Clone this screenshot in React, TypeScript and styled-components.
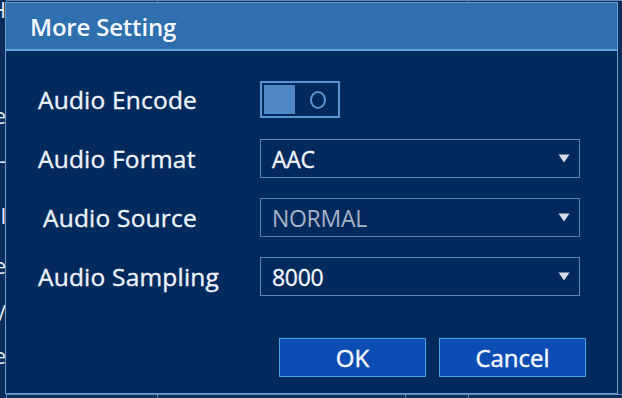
import styled, { createGlobalStyle } from 'styled-components';

const GlobalStyle = createGlobalStyle`
  html, body {
    margin: 0;
    padding: 0;
    background: #0c2c5c;
  }
  body {
    font-family: 'Open Sans', 'Noto Sans', sans-serif;
  }
`;

const Page = styled.div`
  position: relative;
  width: 622px;
  height: 398px;
  overflow: hidden;
  display: flex;
  background: #0c2c5c;
`;

// the settings page that sits behind the modal
const SideList = styled.ul`
  list-style: none;
  margin: 0;
  padding: 0;
  width: 6px;
  flex-shrink: 0;
  display: flex;
  flex-direction: column;
  align-items: flex-end;
  border-right: 1px solid #4f7fb6;
`;

const SideItem = styled.li<{ top: number }>`
  display: flex;
  justify-content: flex-end;
  width: 6px;
  height: 20px;
  margin-top: ${(p) => p.top}px;
  color: #e8eef8;
  font-size: 21px;
  line-height: 20px;
  white-space: nowrap;
`;

const Content = styled.div`
  flex: 1;
  display: flex;
  flex-direction: column;
  justify-content: space-between;
`;

const GridRow = styled.div`
  height: 3px;
  display: flex;
  border-top: 1px solid #5a88bd;
`;

const GridCell = styled.div<{ w: number }>`
  width: ${(p) => p.w}px;
  border-right: 1px solid #5a88bd;
`;

const Dialog = styled.div`
  position: absolute;
  left: 5px;
  top: 2px;
  width: 611px;
  height: 390px;
  display: flex;
  flex-direction: column;
  background: #032a5d;
  border: 1px solid #6a9ccf;
`;

const TitleBar = styled.div`
  height: 46px;
  display: flex;
  align-items: center;
  padding-left: 24px;
  background: #2e6fae;
  border-bottom: 2px solid #5fa6e0;
  color: #f4f8fd;
  font-size: 24px;
  font-weight: 600;
  letter-spacing: -0.2px;
`;

const Body = styled.div`
  flex: 1;
  display: flex;
  flex-direction: column;
  padding: 29px 32px 16px 32px;
  gap: 20px;
`;

const Row = styled.div`
  height: 39px;
  display: flex;
  align-items: center;
`;

const Label = styled.div<{ indent?: boolean }>`
  width: 222px;
  padding-left: ${(p) => (p.indent ? 5 : 0)}px;
  box-sizing: border-box;
  color: #eef3fa;
  font-size: 24.5px;
  letter-spacing: 0.2px;
  -webkit-text-stroke: 0.35px #eef3fa;
  white-space: nowrap;
`;

const Toggle = styled.div`
  width: 80px;
  height: 37px;
  box-sizing: border-box;
  border: 2px solid #5a93d1;
  display: flex;
  align-items: center;
  padding: 2px;
`;

const Knob = styled.div`
  width: 31px;
  height: 29px;
  background: #4f87c5;
`;

const OffMark = styled.svg`
  margin-left: 14px;
`;

const Select = styled.div<{ disabled?: boolean }>`
  width: 320px;
  height: 39px;
  box-sizing: border-box;
  border: 1px solid ${(p) => (p.disabled ? '#5a7fab' : '#5f86b6')};
  display: flex;
  align-items: center;
  padding: 0 9px 0 11px;
  color: ${(p) => (p.disabled ? '#a7b3c6' : '#f4f7fc')};
  font-size: 23px;
  letter-spacing: -0.3px;
  -webkit-text-stroke: ${(p) => (p.disabled ? 0 : 0.3)}px currentColor;
`;

const Value = styled.span`
  flex: 1;
`;

const Footer = styled.div`
  margin-top: 22px;
  display: flex;
  justify-content: flex-end;
  gap: 13px;
  margin-right: -1px;
`;

const Button = styled.button`
  width: 147px;
  height: 39px;
  box-sizing: border-box;
  background: #0b4db2;
  border: 1px solid #43a4e8;
  color: #f4f8fd;
  font-family: inherit;
  font-size: 24px;
  -webkit-text-stroke: 0.45px #f4f8fd;
  padding: 0;
`;

const Arrow = () => (
  <svg width="12" height="9" viewBox="0 0 12 9">
    <path d="M0.5 0.5 H11.5 L6 8.5 Z" fill="#d6dde8" />
  </svg>
);

const rows = [
  { label: 'Audio Format', value: 'AAC' },
  { label: 'Audio Source', value: 'NORMAL', disabled: true, indent: true },
  { label: 'Audio Sampling', value: '8000' },
];

export default function App() {
  return (
    <>
      <GlobalStyle />
      <Page>
        <SideList>
          <SideItem top={0}>H</SideItem>
          <SideItem top={86}>e</SideItem>
          <SideItem top={24}>-</SideItem>
          <SideItem top={36}>l</SideItem>
          <SideItem top={30}>e</SideItem>
          <SideItem top={27}>/</SideItem>
          <SideItem top={23}>e</SideItem>
        </SideList>
        <Content>
          <GridRow>
            <GridCell w={150} />
            <GridCell w={310} />
          </GridRow>
          <GridRow>
            <GridCell w={150} />
            <GridCell w={247} />
            <GridCell w={62} />
          </GridRow>
        </Content>

        <Dialog>
          <TitleBar>More Setting</TitleBar>
          <Body>
            <Row>
              <Label>Audio Encode</Label>
              <Toggle>
                <Knob />
                <OffMark width="18" height="20" viewBox="0 0 18 20">
                  <ellipse cx="9" cy="10" rx="7" ry="8" fill="none" stroke="#5a93d1" strokeWidth="2" />
                </OffMark>
              </Toggle>
            </Row>
            {rows.map((r) => (
              <Row key={r.label}>
                <Label indent={r.indent}>{r.label}</Label>
                <Select disabled={r.disabled}>
                  <Value>{r.value}</Value>
                  <Arrow />
                </Select>
              </Row>
            ))}
            <Footer>
              <Button>OK</Button>
              <Button>Cancel</Button>
            </Footer>
          </Body>
        </Dialog>
      </Page>
    </>
  );
}
